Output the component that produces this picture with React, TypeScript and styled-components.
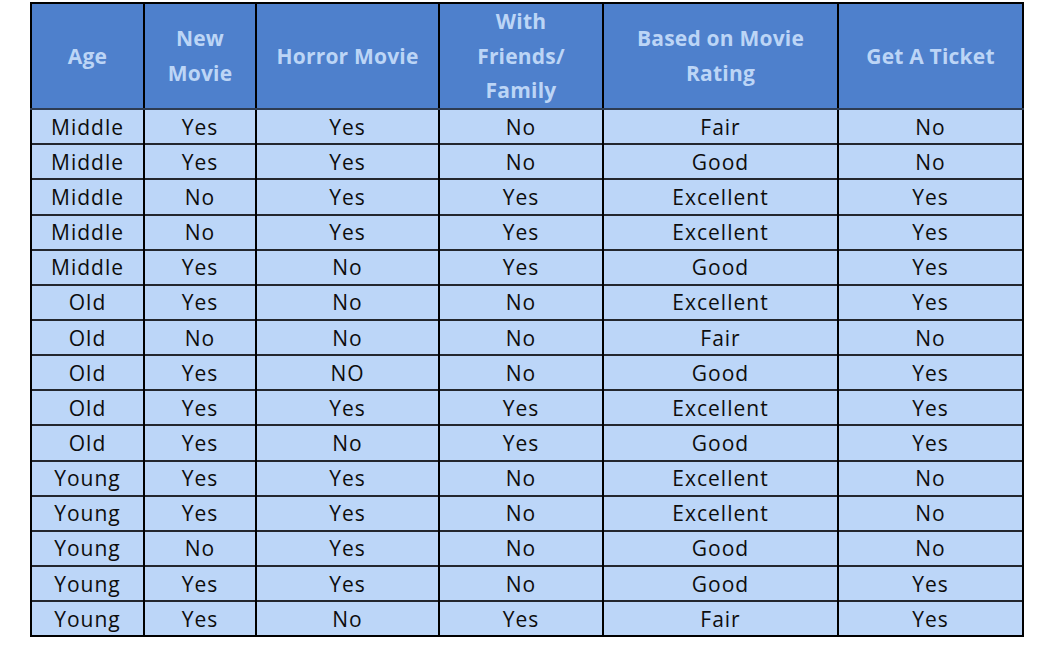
import React from "react";
import styled, { createGlobalStyle } from "styled-components";

const Global = createGlobalStyle`
  html, body { margin: 0; padding: 0; background: #ffffff; }
  body { font-family: "Open Sans", "Liberation Sans", sans-serif; }
`;

const Page = styled.div`
  width: 1060px;
  height: 646px;
  padding: 2px 0 0 30px;
  box-sizing: border-box;
  background: #ffffff;
`;

const Table = styled.table`
  border-collapse: collapse;
  table-layout: fixed;
  width: 994px;
  border: 2px solid #000;
`;

const HeadCell = styled.th`
  background: #4e80cc;
  color: #bcd5f6;
  font-weight: 700;
  font-size: 21px;
  line-height: 34.7px;
  letter-spacing: 0.2px;
  text-align: center;
  vertical-align: middle;
  border-left: 2px solid #000;
  border-right: 2px solid #000;
  border-bottom: 2px solid #2e3c52;
  padding: 0 8px;
  height: 101px;
  box-sizing: border-box;
`;

const Row = styled.tr`
  height: 35.15px;
`;

const Cell = styled.td`
  background: #bcd6f8;
  color: #0d0d0d;
  font-size: 21px;
  letter-spacing: 1px;
  text-align: center;
  vertical-align: middle;
  padding: 0;
  line-height: 30px;
  border-left: 2px solid #000;
  border-right: 2px solid #000;
  border-top: 2px solid #23272e;
`;

const widths = [113, 112, 183, 164, 235, 185];

const headers: React.ReactNode[] = [
  "Age",
  <>New<br />Movie</>,
  "Horror Movie",
  <>With<br />Friends/<br />Family</>,
  <>Based on Movie<br />Rating</>,
  "Get A Ticket",
];

const rows: string[][] = [
  ["Middle", "Yes", "Yes", "No", "Fair", "No"],
  ["Middle", "Yes", "Yes", "No", "Good", "No"],
  ["Middle", "No", "Yes", "Yes", "Excellent", "Yes"],
  ["Middle", "No", "Yes", "Yes", "Excellent", "Yes"],
  ["Middle", "Yes", "No", "Yes", "Good", "Yes"],
  ["Old", "Yes", "No", "No", "Excellent", "Yes"],
  ["Old", "No", "No", "No", "Fair", "No"],
  ["Old", "Yes", "NO", "No", "Good", "Yes"],
  ["Old", "Yes", "Yes", "Yes", "Excellent", "Yes"],
  ["Old", "Yes", "No", "Yes", "Good", "Yes"],
  ["Young", "Yes", "Yes", "No", "Excellent", "No"],
  ["Young", "Yes", "Yes", "No", "Excellent", "No"],
  ["Young", "No", "Yes", "No", "Good", "No"],
  ["Young", "Yes", "Yes", "No", "Good", "Yes"],
  ["Young", "Yes", "No", "Yes", "Fair", "Yes"],
];

export default function App() {
  return (
    <>
      <Global />
      <Page>
        <Table>
          <colgroup>
            {widths.map((w, i) => (
              <col key={i} style={{ width: w }} />
            ))}
          </colgroup>
          <thead>
            <tr>
              {headers.map((h, i) => (
                <HeadCell key={i}>{h}</HeadCell>
              ))}
            </tr>
          </thead>
          <tbody>
            {rows.map((r, i) => (
              <Row key={i}>
                {r.map((c, j) => (
                  <Cell key={j}>{c}</Cell>
                ))}
              </Row>
            ))}
          </tbody>
        </Table>
      </Page>
    </>
  );
}
